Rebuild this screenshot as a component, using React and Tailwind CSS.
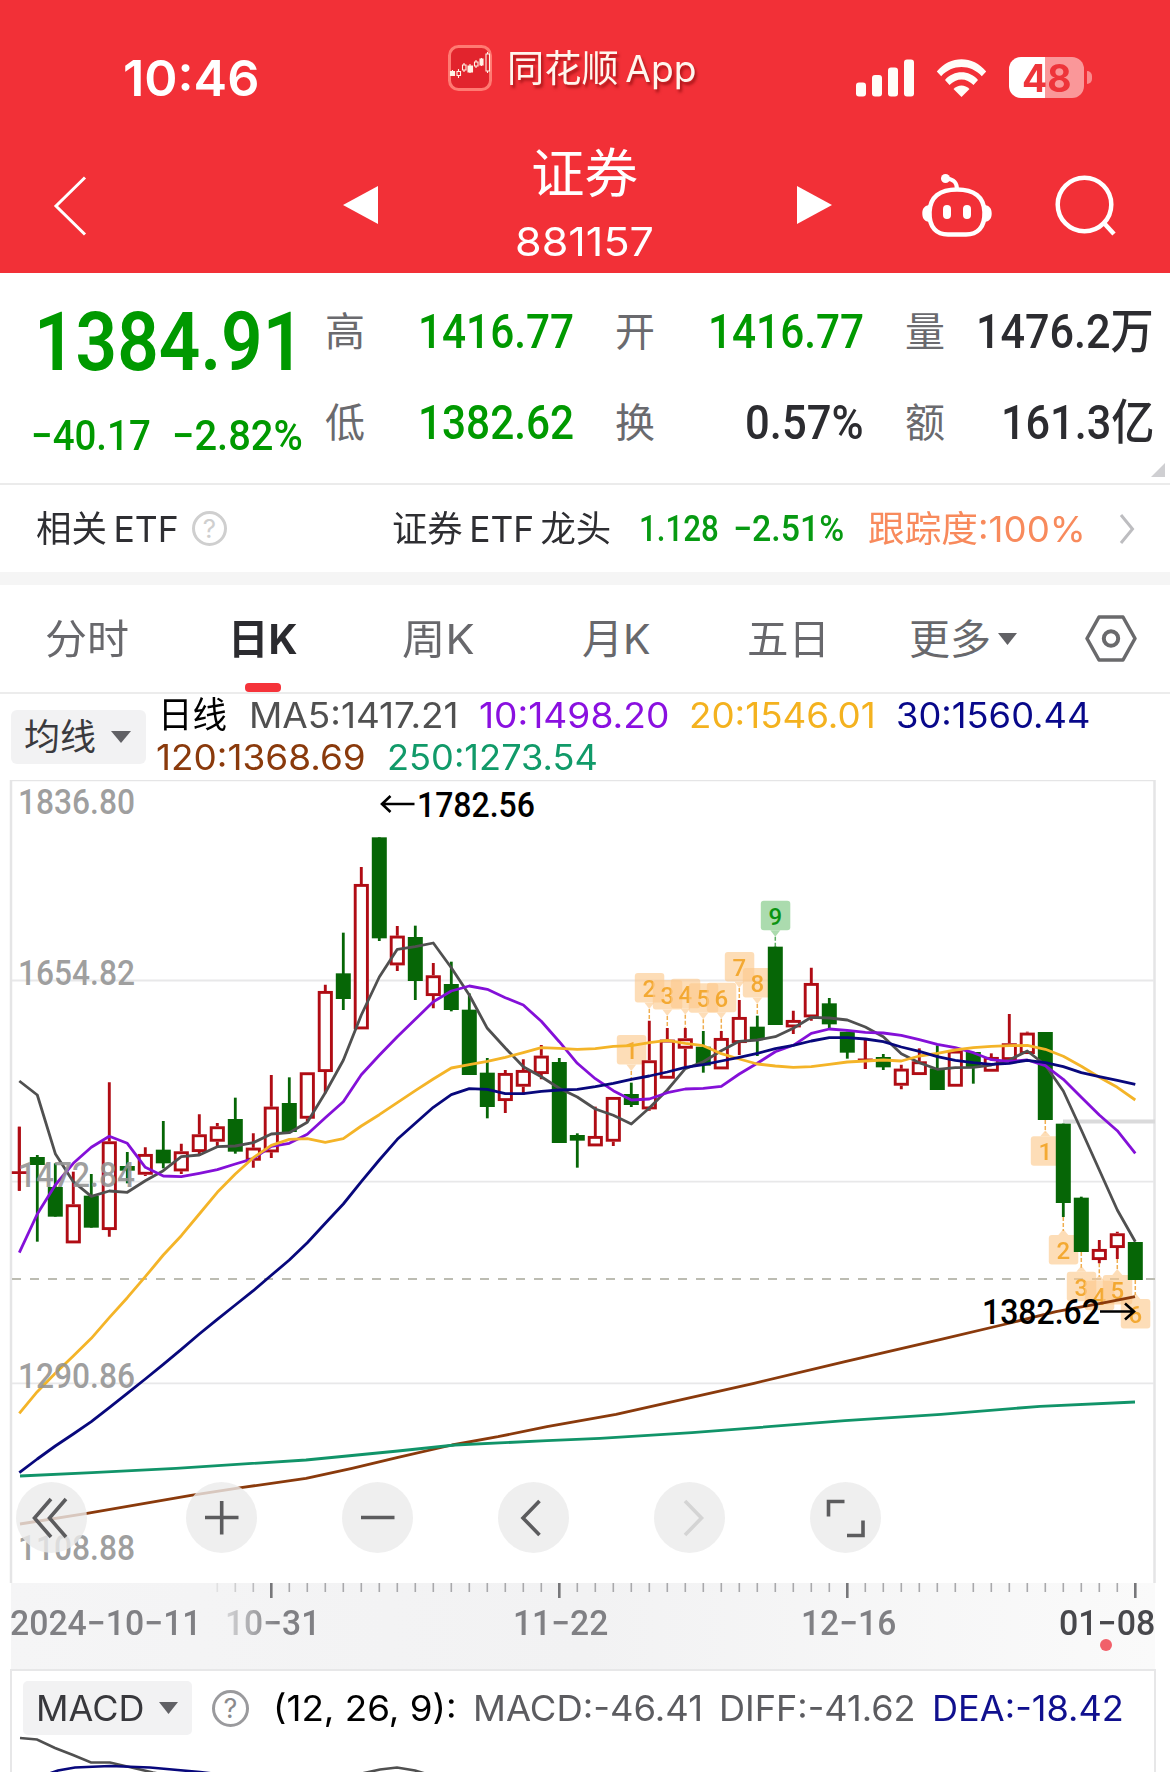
import React, { useLayoutEffect, useRef, useState } from "react";

/* Text squeezed or stretched horizontally to the width of its box. */
function Fit({ className = "", children }) {
  const box = useRef(null);
  const text = useRef(null);
  const [scale, setScale] = useState(1);
  useLayoutEffect(() => {
    const measure = () => {
      if (box.current && text.current) setScale(box.current.clientWidth / text.current.offsetWidth);
    };
    measure();
    document.fonts?.ready.then(measure);
  }, [children]);
  return (
    <span ref={box} className={`inline-flex shrink-0 items-center whitespace-pre leading-none ${className}`}>
      <span ref={text} className="inline-block origin-left" style={{ transform: `scaleX(${scale})` }}>
        {children}
      </span>
    </span>
  );
}

const UI = "font-[Inter,'Noto_Sans_CJK_SC',sans-serif]";
const DIN = "font-[Roboto,'Noto_Sans_CJK_SC',sans-serif] font-medium";

/* ---------- header ---------- */

function AppLogo() {
  return (
    <svg width="44" height="46" viewBox="0 0 44 46" fill="none">
      <rect x="1.5" y="1.5" width="41" height="43" rx="9" fill="#e2242d" stroke="#ff7a72" strokeWidth="3" />
      <g stroke="#fff3e6" strokeWidth="1.1">
        <path d="M4.5 25v6M10.500 24v9M16 18v9M22 19v9M28 15v8M33.500 13v8M39.500 7v21" />
        <path fill="#fff3e6" d="M2.500 26.500h4v4h-4zM20 21h4.500v6h-4.500zM32 14h3v6h-3z" />
        <path fill="#dd222b" d="M9 26.500h3.500v4h-3.500zM14.500 20h3.500v5h-3.500zM26.500 17h3.500v4h-3.500zM38 9h3.500v17h-3.500z" />
      </g>
    </svg>
  );
}

function StatusBar() {
  return (
    <div className="flex h-[139px] items-center pt-4 text-white">
      <Fit className={`${UI} ml-[123px] w-[136px] pt-px text-[50px] font-semibold`}>10:46</Fit>
      <div className="-mt-[19px] ml-[189px] flex items-center">
        <AppLogo />
        <Fit className={`${UI} ml-[15px] w-[190px] pt-px text-[37px] text-[#fff6ee] [text-shadow:2px_3px_3px_rgba(110,0,0,0.55)]`}>
          {"同花顺\u2009App"}
        </Fit>
      </div>
      <svg className="ml-[159px]" width="58" height="38" viewBox="0 0 58 38" fill="#fffdf8">
        <rect x="0" y="23.500" width="10" height="14" rx="3" />
        <rect x="16" y="16" width="10" height="21.500" rx="3" />
        <rect x="32" y="8.500" width="10" height="29" rx="3" />
        <rect x="48" y="0.500" width="10" height="37" rx="3" />
      </svg>
      <svg className="ml-[22px]" width="51" height="38" viewBox="0 0 51 38" fill="#fffdf8">
        <path d="M.8 12.500C14-4 37-4 50.200 12.500L45.800 17.200C35 4.800 16 4.800 5.200 17.200Z" />
        <path d="M9 21C18 10.800 33 10.800 42 21L37.500 26C30.500 18.500 20.500 18.500 13.500 26Z" />
        <path d="M17.500 30C22 25.200 29 25.200 33.500 30L25.500 38Z" />
      </svg>
      <div className="ml-[22px] flex items-center">
        <div className="flex h-[41px] w-[75px] items-center justify-center rounded-[12px] bg-linear-to-r from-white from-48% to-[#fa9799] to-48%">
          <Fit className={`${UI} w-[49px] text-[38px] font-bold text-[#ee343a]`}>48</Fit>
        </div>
        <span className="ml-[3px] h-[13px] w-[5px] rounded-r-full bg-[#fa8a8c]" />
      </div>
    </div>
  );
}

function NavBar() {
  return (
    <div className="flex h-[134px] items-center text-white">
      <svg className="ml-[53px]" width="34" height="60" viewBox="0 0 34 60" fill="none" stroke="#fff" strokeWidth="3">
        <path d="M32 1.500L3 30l29 28.500" />
      </svg>
      <svg className="-mt-[2px] ml-[256px]" width="35" height="38" viewBox="0 0 35 38" fill="#fff">
        <path d="M0 19L35 0v38z" />
      </svg>
      <div className="ml-[137px] flex w-[138px] flex-col items-center">
        <div className="flex h-[71px] items-center">
          <Fit className={`${UI} w-[107px] text-[53px]`}>证券</Fit>
        </div>
        <div className="flex h-[63px] items-center">
          <Fit className={`${UI} w-[139px] text-[40px]`}>881157</Fit>
        </div>
      </div>
      <svg className="-mt-[2px] ml-[144px]" width="35" height="38" viewBox="0 0 35 38" fill="#fff">
        <path d="M35 19L0 0v38z" />
      </svg>
      <svg className="ml-[90px]" width="70" height="64" viewBox="0 0 70 64" fill="none" stroke="#fff" strokeWidth="4.500">
        <path d="M35 15.500C52 15.500 62 23 62.500 38C63 54 55 60.500 44 60.500H26C15 60.500 7 54 7.500 38C8 23 18 15.500 35 15.500Z" />
        <path d="M35 15C35 8 31.500 5.500 25 4.500" strokeWidth="4" />
        <circle cx="23.500" cy="4.500" r="4.500" fill="#fff" stroke="none" />
        <path d="M7 31v17C2 47 .3 44 .3 39.500S2 32 7 31ZM63 31v17C68 47 69.700 44 69.700 39.500S68 32 63 31Z" fill="#fff" stroke="none" />
        <path d="M25 35v6M45 35v6" strokeWidth="8" strokeLinecap="round" />
      </svg>
      <svg className="ml-[63px]" width="62" height="62" viewBox="0 0 62 62" fill="none" stroke="#fff" strokeWidth="4.500">
        <circle cx="29.500" cy="29.500" r="26.800" />
        <path d="M48 47l11 12" />
      </svg>
    </div>
  );
}

/* ---------- quote ---------- */

const STATS = [
  ["高", "1416.77", "w-[156px] text-[#009900]"],
  ["开", "1416.77", "w-[156px] text-[#009900]"],
  ["量", "1476.2万", "w-[178px] text-[#2c2c30]"],
  ["低", "1382.62", "w-[156px] text-[#009900]"],
  ["换", "0.57%", "w-[119px] text-[#2c2c30]"],
  ["额", "161.3亿", "w-[153px] text-[#2c2c30]"],
];

function Quote() {
  return (
    <div className="flex h-[212px] border-b-2 border-[#ebebeb]">
      <div className={`${DIN} ml-[31px] w-[294px] text-[#009900]`}>
        <div className="flex h-[138px] items-center">
          <Fit className="ml-[3px] w-[270px] text-[82px] font-semibold">1384.91</Fit>
        </div>
        <div className="flex h-[50px] items-center">
          <Fit className="w-[120px] text-[42px]">−40.17</Fit>
          <Fit className="ml-[21px] w-[131px] text-[42px]">−2.82%</Fit>
        </div>
      </div>
      <div className="grid w-[829px] grid-cols-3 grid-rows-[91px_91px] gap-x-[41px] pt-[13px]">
        {STATS.map(([label, value, cls]) => (
          <div key={label} className="flex items-center justify-between">
            <span className={`${UI} pt-px text-[40px] leading-none text-[#6a6a6e]`}>{label}</span>
            <Fit className={`${DIN} text-[48px] ${cls}`}>{value}</Fit>
          </div>
        ))}
      </div>
      <svg className="-ml-[3px] mt-[190px]" width="14" height="14" viewBox="0 0 14 14">
        <path d="M14 0v14H0z" fill="#cfcfd2" />
      </svg>
    </div>
  );
}

function Help({ size, color }) {
  return (
    <span className={`${UI} ${size} ${color} flex shrink-0 items-center justify-center rounded-full leading-none`}>?</span>
  );
}

function EtfRow() {
  return (
    <div className={`${UI} flex h-[87px] items-center text-[36px] text-[#2e2e32]`}>
      <Fit className="ml-[36px] w-[143px] pt-px">{"相关\u2009ETF"}</Fit>
      <span className="ml-[13px]">
        <Help size="size-[35px] text-[26px]" color="border-[3px] border-[#cfcfcf] text-[#cfcfcf]" />
      </span>
      <Fit className="ml-[165px] w-[219px] pt-px">{"证券\u2009ETF\u2009龙头"}</Fit>
      <Fit className={`${DIN} ml-[28px] w-[80px] text-[36px] text-[#079a12]`}>1.128</Fit>
      <Fit className={`${DIN} ml-[14px] w-[111px] text-[36px] text-[#079a12]`}>−2.51%</Fit>
      <Fit className="ml-[24px] w-[218px] pt-px text-[#f88a5c]">跟踪度:100%</Fit>
      <svg className="ml-[33px]" width="16" height="30" viewBox="0 0 16 30" fill="none" stroke="#bdbdc0" strokeWidth="3">
        <path d="M2 1l11.500 14L2 29" />
      </svg>
    </div>
  );
}

function Down({ className }) {
  return (
    <svg className={className} viewBox="0 0 18 12" fill="#616165" preserveAspectRatio="none">
      <path d="M0 0h18L9 12z" />
    </svg>
  );
}

function Tabs() {
  return (
    <div className={`${UI} flex h-[109px] items-center border-b-2 border-[#ececec] text-[41px] text-[#68686c]`}>
      <Fit className="ml-[45px] w-[84px] pt-px">分时</Fit>
      <span className="ml-[99px] flex h-[107px] w-[70px] flex-col items-center justify-between">
        <Fit className="mt-[34px] w-[70px] font-bold text-[#2b2b2f]">日K</Fit>
        <span className="h-[9px] w-[36px] rounded-[4px] bg-[#f5333a]" />
      </span>
      <Fit className="ml-[104px] w-[73px] pt-px">周K</Fit>
      <Fit className="ml-[107px] w-[69px] pt-px">月K</Fit>
      <Fit className="ml-[96px] w-[83px] pt-px">五日</Fit>
      <Fit className="ml-[79px] w-[82px] pt-px">更多</Fit>
      <Down className="ml-[7px] h-[12px] w-[19px]" />
      <svg className="ml-[68px]" width="52" height="47" viewBox="0 0 52 47" fill="none" stroke="#6a6a6c" strokeWidth="3.500" strokeLinejoin="round">
        <path d="M14 2h24l12 21.500L38 45H14L2 23.500z" />
        <circle cx="26" cy="23.500" r="7.200" strokeWidth="4" />
      </svg>
    </div>
  );
}

function Legend() {
  return (
    <div className={`${UI} flex h-[86px] text-[36px]`}>
      <div className="ml-[11px] mt-[16px] flex h-[54px] w-[135px] items-center rounded-[6px] bg-[#f2f2f3] text-[#3a3a3e]">
        <Fit className="ml-[13px] w-[72px]">均线</Fit>
        <Down className="ml-[15px] h-[12px] w-[20px]" />
      </div>
      <div className="ml-[12px] flex flex-col">
        <div className="flex h-[42px] items-center">
          <Fit className="w-[69px] text-black">日线</Fit>
          <Fit className="ml-[22px] w-[210px] text-[35px] text-[#505050]">MA5:1417.21</Fit>
          <Fit className="ml-[20px] w-[190px] text-[35px] text-[#8a10e0]">10:1498.20</Fit>
          <Fit className="ml-[20px] w-[187px] text-[35px] text-[#f4b21f]">20:1546.01</Fit>
          <Fit className="ml-[20px] w-[195px] text-[35px] text-[#08088a]">30:1560.44</Fit>
        </div>
        <div className="flex h-[42px] items-center">
          <Fit className="-ml-[2px] w-[210px] text-[35px] text-[#8a3a0c]">120:1368.69</Fit>
          <Fit className="ml-[21px] w-[211px] text-[35px] text-[#119a69]">250:1273.54</Fit>
        </div>
      </div>
    </div>
  );
}

/* ---------- K-line chart ---------- */

/* Every row: colour, high, body top, body bottom, low (thirds of a pixel from the top of the plot). */
const CANDLES = [
  ["r", 1040, 1173, 1183, 1232], ["g", 1125, 1131, 1155, 1385], ["g", 1150, 1221, 1310, 1310],
  ["r", 1175, 1273, 1390, 1390], ["g", 1182, 1247, 1343, 1343], ["r", 907, 1084, 1350, 1370],
  ["g", 1116, 1158, 1172, 1210], ["r", 1102, 1122, 1184, 1188], ["g", 1023, 1109, 1150, 1165],
  ["r", 1091, 1114, 1174, 1182], ["r", 1003, 1063, 1116, 1128], ["r", 1029, 1039, 1085, 1098],
  ["g", 953, 1017, 1115, 1121], ["r", 1060, 1103, 1142, 1163], ["r", 885, 980, 1117, 1134],
  ["g", 892, 969, 1056, 1056], ["r", 877, 877, 1016, 1025], ["r", 614, 633, 876, 940],
  ["g", 458, 580, 657, 690], ["r", 261, 312, 748, 748], ["g", 172, 172, 475, 483],
  ["r", 438, 467, 556, 573], ["g", 437, 471, 603, 660], ["r", 549, 586, 648, 685],
  ["g", 545, 612, 690, 694], ["g", 640, 689, 885, 885], ["g", 834, 878, 981, 1015],
  ["r", 870, 879, 963, 999], ["r", 838, 870, 920, 944], ["r", 795, 827, 882, 898],
  ["g", 834, 846, 1089, 1089], ["g", 1060, 1065, 1082, 1163], ["r", 980, 1068, 1099, 1099],
  ["r", 951, 951, 1085, 1098], ["g", 908, 942, 975, 981], ["r", 722, 841, 988, 992],
  ["r", 744, 779, 896, 896], ["r", 744, 775, 806, 860], ["g", 753, 800, 857, 878],
  ["r", 753, 774, 868, 868], ["r", 660, 711, 789, 825], ["g", 707, 740, 780, 828],
  ["g", 500, 500, 735, 735], ["r", 692, 720, 742, 762], ["r", 563, 609, 712, 722],
  ["g", 654, 670, 733, 748], ["g", 755, 755, 818, 836], ["r", 780, 836, 844, 867],
  ["g", 822, 831, 862, 870], ["r", 854, 866, 917, 928], ["r", 805, 844, 885, 885],
  ["g", 796, 865, 930, 930], ["r", 810, 812, 920, 920], ["g", 815, 816, 861, 911],
  ["r", 820, 831, 875, 875], ["r", 702, 790, 840, 845], ["r", 755, 758, 822, 822],
  ["g", 756, 756, 1020, 1020], ["g", 1031, 1031, 1269, 1311], ["g", 1250, 1253, 1416, 1416],
  ["r", 1380, 1407, 1440, 1450], ["r", 1355, 1360, 1404, 1437], ["g", 1386, 1386, 1500, 1500],
];

const AVERAGES = [
  ["#505050", [903, 945, 1121, 1205, 1249, 1233, 1237, 1202, 1172, 1130, 1125, 1100, 1098, 1088, 1062, 1058, 1027, 938, 841, 705, 591, 508, 500, 489, 563, 645, 745, 804, 860, 890, 925, 951, 987, 1006, 1032, 984, 930, 866, 845, 812, 784, 780, 770, 745, 712, 714, 720, 741, 770, 821, 848, 868, 863, 862, 855, 840, 813, 855, 933, 1050, 1170, 1290, 1385]],
  ["#8410d8", [1418, 1302, 1215, 1150, 1102, 1069, 1090, 1162, 1188, 1190, 1180, 1169, 1152, 1136, 1099, 1090, 1063, 1013, 965, 884, 826, 770, 718, 665, 633, 618, 628, 653, 675, 724, 785, 850, 896, 932, 960, 957, 938, 927, 925, 919, 882, 850, 815, 796, 760, 747, 751, 757, 759, 766, 779, 793, 803, 818, 839, 844, 840, 857, 898, 952, 1005, 1052, 1120]],
  ["#f4b428", [1900, 1835, 1780, 1728, 1675, 1613, 1553, 1490, 1425, 1367, 1302, 1237, 1182, 1133, 1096, 1078, 1076, 1087, 1076, 1038, 1004, 968, 932, 897, 864, 854, 844, 832, 818, 803, 805, 808, 806, 799, 797, 788, 781, 790, 797, 821, 837, 852, 858, 862, 860, 853, 846, 843, 840, 843, 828, 820, 810, 803, 799, 797, 796, 808, 829, 859, 892, 922, 960]],
  ["#08087c", [2078, 2037, 1998, 1962, 1925, 1883, 1840, 1797, 1753, 1708, 1662, 1618, 1575, 1532, 1486, 1440, 1388, 1330, 1272, 1205, 1140, 1078, 1030, 982, 944, 926, 928, 941, 941, 934, 930, 928, 920, 910, 898, 888, 876, 862, 854, 843, 832, 820, 806, 796, 783, 773, 773, 777, 785, 801, 814, 830, 841, 848, 853, 850, 841, 848, 860, 878, 890, 901, 913]],
];

const MA120 = [[20, 2232], [87, 2200], [191, 2146], [241, 2123], [306, 2095], [352, 2065], [398, 2032], [452, 1995], [498, 1970], [547, 1940], [616, 1903], [754, 1810], [845, 1745], [941, 1678], [1006, 1632], [1056, 1595], [1106, 1567], [1135, 1550]];
const MA250 = [[20, 2088], [92, 2078], [176, 2065], [306, 2040], [398, 2013], [455, 1995], [547, 1982], [600, 1975], [692, 1958], [845, 1922], [941, 1903], [1040, 1879], [1135, 1866]];

/* index, digit, top of the tag, end of the dotted stem */
const TAGS_UP = [[34, 1, 765, 908], [35, 2, 579, 722], [36, 3, 600, 744], [37, 4, 596, 744], [38, 5, 610, 753], [39, 6, 608, 753], [40, 7, 516, 660], [41, 8, 564, 707], [42, 9, 362, 500]];
const TAGS_DOWN = [[57, 1, 1069, 1020], [58, 2, 1365, 1311], [59, 3, 1475, 1416], [60, 4, 1502, 1450], [61, 5, 1485, 1437], [62, 6, 1557, 1500]];

const cx = (i) => 19.3 + i * 18;
const py = (v) => v / 3;
const toPoints = (list) => list.map(([x, v]) => `${x},${py(v).toFixed(1)}`).join(" ");

function Tag({ i, digit, top, end, down }) {
  const x = cx(i);
  const y = py(top);
  const green = digit === 9;
  const fill = green ? "#8fd093" : "#fdc98c";
  const tip = down ? `M${x - 5} ${y}L${x} ${y - 6}L${x + 5} ${y}Z` : `M${x - 5} ${y + 29.500}L${x} ${y + 36}L${x + 5} ${y + 29.500}Z`;
  return (
    <g>
      <g fill={fill} opacity={green ? 0.75 : 0.62}>
        <rect x={x - 14.500} y={y} width="29.500" height="29.500" rx="3" />
        <path d={tip} />
      </g>
      <path d={down ? `M${x} ${py(end)}V${y - 4}` : `M${x} ${y + 36}V${py(end)}`} stroke={green ? "#5cae62" : "#f0ae50"} strokeWidth="1.500" strokeDasharray="4 2" />
      <text x={x} y={y + 24} textAnchor="middle" fontSize="24" fontFamily="Roboto, sans-serif" fill={green ? "#0b9412" : "#f2a01c"} opacity={green ? 1 : 0.85}>
        {digit}
      </text>
    </g>
  );
}

function Candle({ i, data }) {
  const [kind, high, top, bottom, low] = data;
  const x = cx(i);
  if (kind === "g") {
    return (
      <g fill="#066606">
        <rect x={x - 1.400} y={py(high)} width="2.800" height={py(low - high)} />
        <rect x={x - 7.500} y={py(top)} width="15" height={py(bottom - top)} />
      </g>
    );
  }
  const flat = bottom - top < 14;
  return (
    <g stroke="#b00c14" strokeWidth="2.900" fill="none">
      <path d={`M${x} ${py(high)}V${py(top)}M${x} ${py(bottom)}V${py(low)}`} />
      {flat ? (
        <path d={`M${x - 7.500} ${py((top + bottom) / 2)}h15M${x} ${py(high)}V${py(low)}`} />
      ) : (
        <rect x={x - 6.100} y={py(top) + 1.400} width="12.200" height={py(bottom - top) - 2.800} fill="#fff" />
      )}
    </g>
  );
}

const SCALE = [["1836.80", 34], ["1654.82", 205], ["1472.84", 407], ["1290.86", 608], ["1108.88", 780]];

function PriceChart() {
  return (
    <svg width="1170" height="803" viewBox="0 0 1170 803" fill="none" className="block" fontFamily="Roboto, sans-serif" fontWeight="500">
      <path d="M11 804V0H1154.500V804" stroke="#e5e5e6" strokeWidth="2.500" />
      <path d="M12 200.500H1154M12 401.700H1154M12 603.300H1154" stroke="#e8e8e9" strokeWidth="1.800" />
      <path d="M1063 341.500H1155" stroke="#dadadb" strokeWidth="4" />
      <path d="M12 499H1155" stroke="#bcbcb2" strokeWidth="2" strokeDasharray="9 9" />
      {TAGS_UP.map(([i, d, t, e]) => <Tag key={i} i={i} digit={d} top={t} end={e} />)}
      {TAGS_DOWN.map(([i, d, t, e]) => <Tag key={i} i={i} digit={d} top={t} end={e} down />)}
      {CANDLES.map((c, i) => <Candle key={i} i={i} data={c} />)}
      <g strokeWidth="2.800" strokeLinejoin="round">
        {AVERAGES.map(([color, list]) => (
          <polyline key={color} stroke={color} points={toPoints(list.map((v, i) => [cx(i), v]))} />
        ))}
        <polyline stroke="#8a3a0c" points={toPoints(MA120)} />
        <polyline stroke="#119469" points={toPoints(MA250)} />
      </g>
      <g fontSize="35" fill="#929292" fillOpacity="0.88">
        {SCALE.map(([label, y]) => (
          <text key={label} x="18" y={y} textLength="117" lengthAdjust="spacingAndGlyphs">{label}</text>
        ))}
      </g>
      <g fontSize="35" fill="#000">
        <text x="417" y="37" textLength="118" lengthAdjust="spacingAndGlyphs">1782.56</text>
        <text x="982" y="544" textLength="118" lengthAdjust="spacingAndGlyphs">1382.62</text>
      </g>
      <g stroke="#000" strokeWidth="2.600">
        <path d="M414.500 24H382M390.500 16L382 24l8.500 8" />
        <path d="M1100 531.500H1134M1125 523.500L1134 531.500l-9 8" />
      </g>
    </svg>
  );
}

const CONTROLS = [
  ["ml-0", "#5c5c5e", "M35 17L18.500 36L35 55M50 17L33.500 36L50 55"],
  ["ml-[99px]", "#5c5c5e", "M19 35.500H52.500M35.700 19V52.500"],
  ["ml-[85px]", "#5c5c5e", "M19 35.500H52.500"],
  ["ml-[85px]", "#5c5c5e", "M41.500 19L25 36L41.500 53"],
  ["ml-[85px]", "#d4d4d4", "M31 19L47.500 36L31 53"],
  ["ml-[85px]", "#5c5c5e", "M18.500 34.500V19.500H34.500M53 38.500V53.500H37"],
];

function Controls() {
  return (
    <div className="absolute left-[16px] top-[702px] flex">
      {CONTROLS.map(([gap, color, d], n) => (
        <button key={n} className={`${gap} size-[71px] rounded-full bg-[#ebebeb]/80`}>
          <svg width="71" height="71" viewBox="0 0 71 71" fill="none" stroke={color} strokeWidth="3.600">
            <path d={d} />
          </svg>
        </button>
      ))}
    </div>
  );
}

const TICKS = Array.from({ length: 52 }, (_, n) => n + 11);

function DateAxis() {
  return (
    <div className="ml-[11px] h-[86px] w-[1144px] bg-linear-to-r from-[#f5f5f6] via-[#f2f2f3] to-[#fafafa]">
      <svg width="1144" height="16" viewBox="11 0 1144 16" className="block">
        {TICKS.map((i) => {
          const major = (i - 14) % 16 === 0;
          return (
            <rect key={i} x={cx(i) - (major ? 1.300 : 0.800)} y="0" width={major ? 2.600 : 1.600} height={major ? 15 : 9} fill={major ? "#77777a" : "#a9a9ac"} opacity={i < 14 ? (i - 10) / 4 : 1} />
          );
        })}
      </svg>
      <div className={`${DIN} flex h-[48px] items-center text-[35px] text-[#808084]`}>
        <Fit className="-ml-px w-[192px]">2024−10−11</Fit>
        <Fit className="ml-[23px] w-[95px] [mask-image:linear-gradient(to_right,rgba(0,0,0,0.25),#000_55%)]">10−31</Fit>
        <Fit className="ml-[193px] w-[95px]">11−22</Fit>
        <Fit className="ml-[193px] w-[95px]">12−16</Fit>
        <Fit className="ml-[163px] w-[96px] text-[#48484c]">01−08</Fit>
      </div>
      <div className="-mt-[8px] ml-[1089px] size-[12px] rounded-full bg-[#f1606a]" />
    </div>
  );
}

/* ---------- MACD ---------- */

function Macd() {
  return (
    <div className={`${UI} ml-[10px] flex h-[104px] w-[1146px] flex-col border-2 border-b-0 border-[#e7e7e8] text-[35px]`}>
      <div className="mt-[10px] flex h-[54px] items-center">
        <div className="ml-[11px] flex h-[54px] w-[169px] items-center rounded-[5px] bg-[#f2f2f3] text-[#38383c]">
          <Fit className="ml-[13px] w-[108px] pt-px">MACD</Fit>
          <Down className="ml-[15px] h-[12px] w-[19px]" />
        </div>
        <span className="ml-[20px]">
          <Help size="size-[37px] text-[27px]" color="border-[3px] border-[#9a9a9d] text-[#8a8a8d]" />
        </span>
        <Fit className="ml-[24px] w-[184px] pt-px text-black">(12, 26, 9):</Fit>
        <Fit className="ml-[16px] w-[230px] pt-px text-[#5c5c60]">MACD:-46.41</Fit>
        <Fit className="ml-[16px] w-[197px] pt-px text-[#5c5c60]">DIFF:-41.62</Fit>
        <Fit className="ml-[16px] w-[192px] pt-px text-[#10108e]">DEA:-18.42</Fit>
      </div>
      <svg width="1141" height="38" viewBox="12 0 1141 38" fill="none" strokeWidth="2.600" className="shrink-0">
        <path d="M20 3L37 4.500L55 13L73 20L91 27.500H110L153 37.500L170 41M355 40L380 34.500L397 32.500L415 35.500L430 40" stroke="#505050" />
        <path d="M45 40L58 35.500L75 32.500L110 31L150 32.500L200 37L225 40" stroke="#08087c" />
      </svg>
    </div>
  );
}

export default function App() {
  return (
    <div className="h-[1772px] w-[1170px] overflow-hidden bg-white">
      <header className="h-[273px] bg-[#f23037]">
        <StatusBar />
        <NavBar />
      </header>
      <Quote />
      <EtfRow />
      <div className="h-[13px] bg-[#f5f5f5]" />
      <Tabs />
      <Legend />
      <div className="relative h-[803px]">
        <PriceChart />
        <Controls />
      </div>
      <DateAxis />
      <Macd />
    </div>
  );
}
